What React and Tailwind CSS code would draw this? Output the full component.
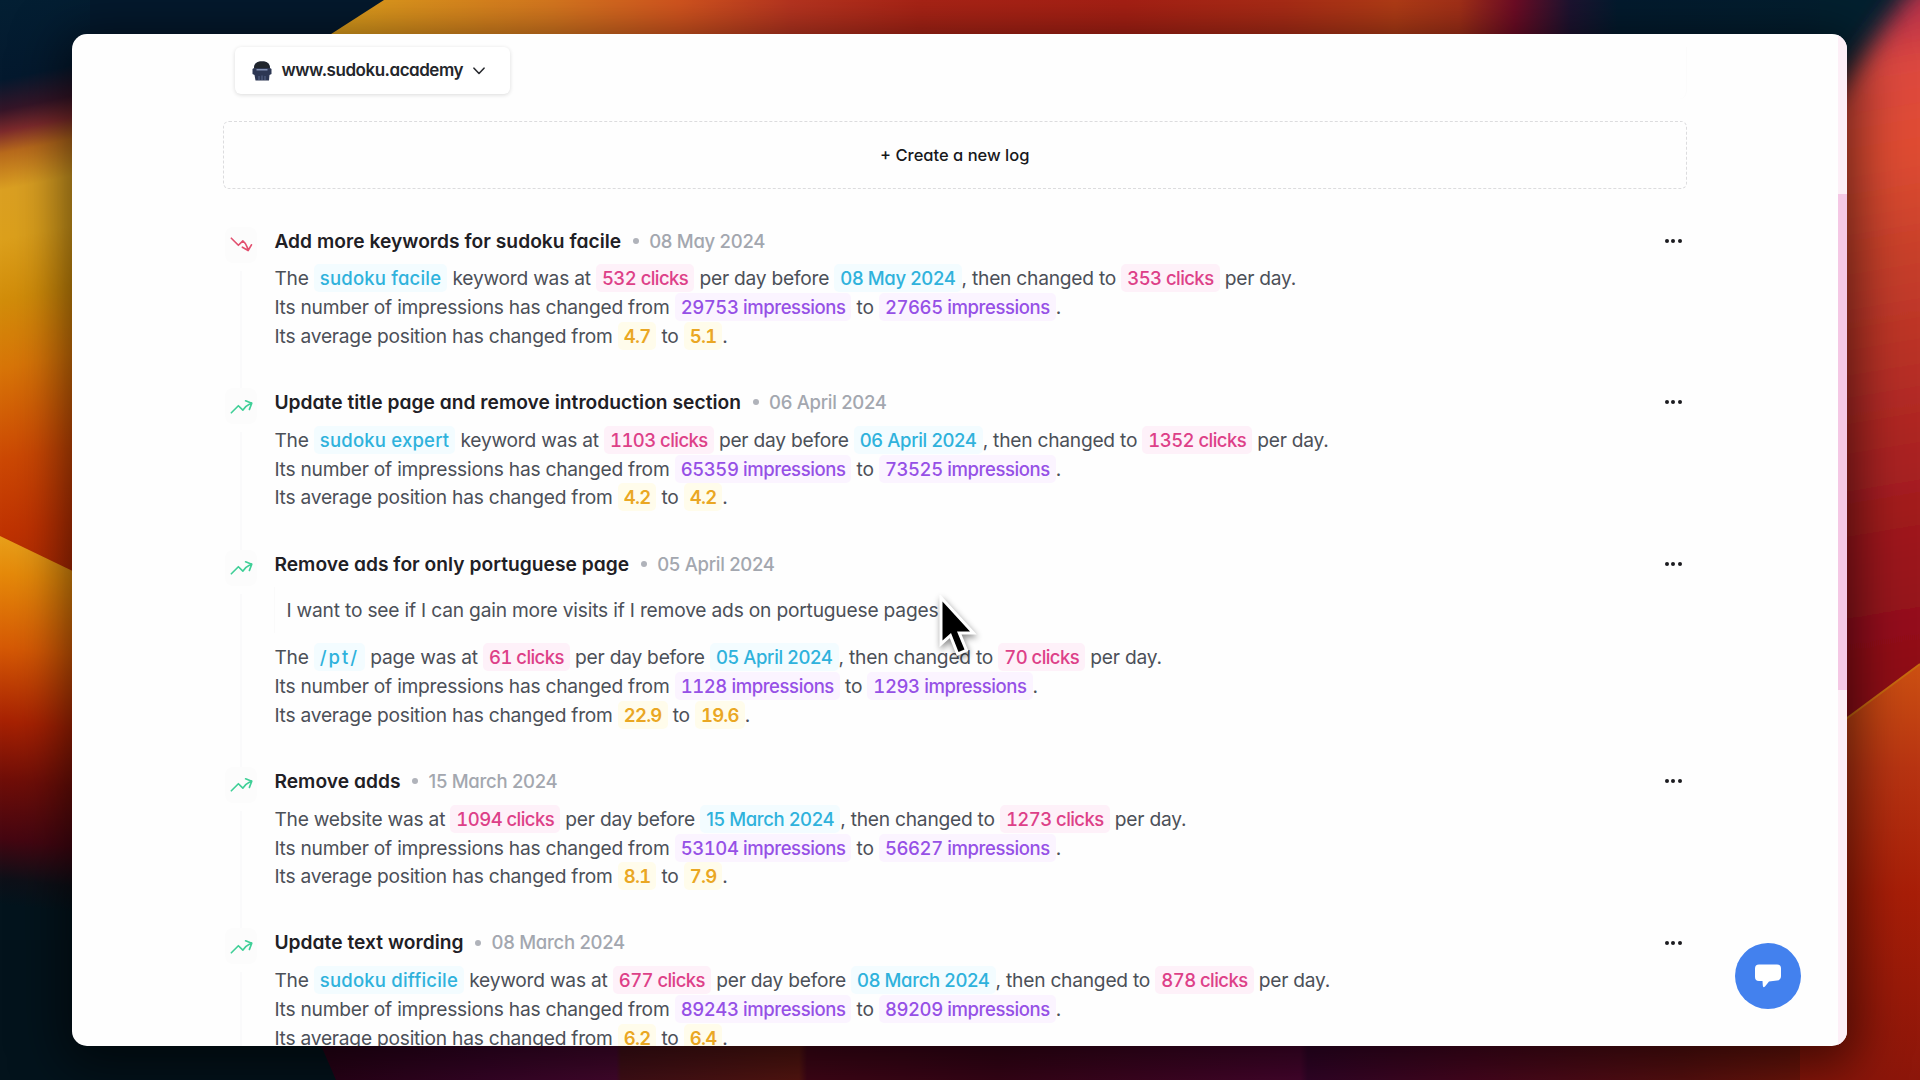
import React from 'react';

const logs = [
  {
    title: 'Add more keywords for sudoku facile', date: '08 May 2024', trend: 'down',
    subject: 'sudoku facile', kind: 'keyword was at', clicks: ['532', '353'],
    impressions: ['29753', '27665'], position: ['4.7', '5.1'],
  },
  {
    title: 'Update title page and remove introduction section', date: '06 April 2024', trend: 'up',
    subject: 'sudoku expert', kind: 'keyword was at', clicks: ['1103', '1352'],
    impressions: ['65359', '73525'], position: ['4.2', '4.2'],
  },
  {
    title: 'Remove ads for only portuguese page', date: '05 April 2024', trend: 'up',
    note: 'I want to see if I can gain more visits if I remove ads on portuguese pages',
    subject: '/pt/', kind: 'page was at', clicks: ['61', '70'],
    impressions: ['1128', '1293'], position: ['22.9', '19.6'],
  },
  {
    title: 'Remove adds', date: '15 March 2024', trend: 'up',
    kind: 'website was at', clicks: ['1094', '1273'],
    impressions: ['53104', '56627'], position: ['8.1', '7.9'],
  },
  {
    title: 'Update text wording', date: '08 March 2024', trend: 'up',
    subject: 'sudoku difficile', kind: 'keyword was at', clicks: ['677', '878'],
    impressions: ['89243', '89209'], position: ['6.2', '6.4'],
  },
];

const chipStyles = {
  subject: "bg-[#f3fcff] font-medium text-[#2fb2dc] tracking-[0.2px] [font-feature-settings:'cv11']",
  path: "bg-[#f3fcff] font-medium text-[#2fb2dc] tracking-[2px] [font-feature-settings:'cv11']",
  date: "bg-[#f3fcff] font-medium text-[#2fb2dc] tracking-[-0.34px] [font-feature-settings:'cv11']",
  clicks: "bg-[#fef1f9] font-medium text-[#dd4088] tracking-[-0.56px] [font-feature-settings:'cv11','tnum']",
  impressions: "bg-[#fbf4ff] font-medium text-[#9650e6] tracking-[-0.42px] [font-feature-settings:'cv11','tnum']",
  position: "bg-[#fffceb] font-semibold text-[#eaa723] tracking-[-0.8px] [font-feature-settings:'cv11','tnum']",
};

function Chip({ type, children }) {
  return (
    <span className={`rounded-[5px] px-[6px] py-[3px] text-[18.5px] ${chipStyles[type]}`}>
      {children}
    </span>
  );
}

function TrendIcon({ trend }) {
  return (
    <svg
      viewBox="0 0 24 24" fill="none" strokeWidth="1.6" strokeLinecap="round" strokeLinejoin="round"
      className={`size-[25px] ${trend === 'up' ? 'stroke-[#3fcf97]' : 'stroke-[#e2506f]'}`}
    >
      {trend === 'up' ? (
        <path d="M2.25 18 9 11.25l4.306 4.306a11.95 11.95 0 0 1 5.814-5.518l2.74-1.22m0 0-5.94-2.281m5.94 2.28-2.28 5.941" />
      ) : (
        <path d="M2.25 6 9 12.75l4.286-4.286a11.948 11.948 0 0 1 4.306 6.43l.776 2.898m0 0 3.182-5.511m-3.182 5.51-5.511-3.181" />
      )}
    </svg>
  );
}

function Ellipsis() {
  return (
    <button className="mr-[5.5px] flex h-[28.8px] items-center gap-[2.5px]">
      <span className="size-1 rounded-full bg-[#1b1b1f]" />
      <span className="size-1 rounded-full bg-[#1b1b1f]" />
      <span className="size-1 rounded-full bg-[#1b1b1f]" />
    </button>
  );
}

function LogEntry({ log }) {
  return (
    <li className="flex">
      <div className="flex w-[51.9px] shrink-0 flex-col items-center pr-[14px]">
        <div className="flex h-9 w-8 items-center justify-center rounded-lg bg-[#fcfcfc]">
          <TrendIcon trend={log.trend} />
        </div>
        <div className="mt-2 w-0.5 grow bg-[#fafafb]" />
      </div>
      <div className="grow pb-[37.3px]">
        <div className="flex items-center justify-between">
          <h2 className="flex h-[28.8px] items-center whitespace-nowrap [font-feature-settings:'cv11']">
            <span className="text-[19.2px] font-semibold tracking-[0.03px] text-[#1f2025]">{log.title}</span>
            <span className="mr-[10.5px] ml-[11.5px] size-[6px] rounded-full bg-[#b0b3ba]" />
            <span className="mt-px text-[18.5px] font-medium tracking-[-0.28px] text-[#a3a7af]">{log.date}</span>
          </h2>
          <Ellipsis />
        </div>
        {log.note && (
          <blockquote className="mt-[9px] mb-[10.7px] flex h-[45.2px] items-center border-l border-[#fafafa] pl-[11px] text-[19.2px] tracking-[-0.2px]">
            {log.note}
          </blockquote>
        )}
        <div className={`text-[19.2px] leading-[28.8px] tracking-[-0.24px] whitespace-nowrap ${log.note ? '' : 'mt-[9px]'}`}>
          <p>
            The {log.subject && <Chip type={log.subject.startsWith('/') ? 'path' : 'subject'}>{log.subject}</Chip>}{log.subject && ' '}
            {log.kind} <Chip type="clicks">{log.clicks[0]} clicks</Chip> per day before{' '}
            <Chip type="date">{log.date}</Chip>, then changed to{' '}
            <Chip type="clicks">{log.clicks[1]} clicks</Chip> per day.
          </p>
          <p>
            Its number of impressions has changed from{' '}
            <Chip type="impressions">{log.impressions[0]} impressions</Chip> to{' '}
            <Chip type="impressions">{log.impressions[1]} impressions</Chip>.
          </p>
          <p>
            Its average position has changed from{' '}
            <Chip type="position">{log.position[0]}</Chip> to <Chip type="position">{log.position[1]}</Chip>.
          </p>
        </div>
      </div>
    </li>
  );
}

function Stops({ items }) {
  return items.map(([offset, color]) => <stop key={offset} offset={offset} stopColor={color} />);
}

function Wallpaper() {
  return (
    <svg viewBox="0 0 1920 1080" className="absolute inset-0 size-full">
      <defs>
        <linearGradient id="top" gradientUnits="userSpaceOnUse" x1="330" y1="0" x2="1920" y2="0">
          <Stops items={[[0, '#dfa01c'], [0.14, '#d8781f'], [0.22, '#d4551f'], [0.29, '#b93520'], [0.37, '#ab2416'], [0.5, '#a82014'], [0.6, '#ab2c16'], [0.67, '#b23c16'], [0.71, '#a43018'], [0.745, '#6f0c25'], [0.78, '#1d1330'], [0.81, '#031b2e'], [1, '#03202f']]} />
        </linearGradient>
        <linearGradient id="leftTop" gradientUnits="userSpaceOnUse" x1="0" y1="0" x2="120" y2="590">
          <Stops items={[[0, '#031f33'], [0.13, '#04192e'], [0.18, '#351528'], [0.215, '#7c2a2c'], [0.25, '#b86a1c'], [0.31, '#dba022'], [0.39, '#dca01c'], [0.49, '#d28d0a'], [0.6, '#d87508'], [0.75, '#cc4804'], [0.87, '#bf3202'], [1, '#a82503']]} />
        </linearGradient>
        <linearGradient id="leftBottom" gradientUnits="userSpaceOnUse" x1="0" y1="536" x2="-40" y2="900">
          <Stops items={[[0, '#e8a01a'], [0.1, '#e68a0a'], [0.3, '#d65a05'], [0.5, '#a82203'], [0.66, '#700e08'], [0.82, '#450611'], [0.93, '#0e1018'], [1, '#03141d']]} />
        </linearGradient>
        <linearGradient id="rightTop" gradientUnits="userSpaceOnUse" x1="1850" y1="20" x2="1960" y2="680">
          <Stops items={[[0, '#b83048'], [0.08, '#dd4840'], [0.2, '#e04d32'], [0.36, '#c8402b'], [0.6, '#b02824'], [0.8, '#9c161c'], [1, '#8d0b18']]} />
        </linearGradient>
        <linearGradient id="rightBottom" gradientUnits="userSpaceOnUse" x1="0" y1="665" x2="0" y2="1080">
          <Stops items={[[0, '#cc5012'], [0.25, '#b83412'], [0.55, '#a81e08'], [1, '#8c160a']]} />
        </linearGradient>
        <linearGradient id="bottom" gradientUnits="userSpaceOnUse" x1="330" y1="0" x2="1920" y2="0">
          <Stops items={[[0, '#2a0218'], [0.1, '#3a0429'], [0.18, '#480830'], [0.183, '#451018'], [0.295, '#5b1712'], [0.3, '#440618'], [0.42, '#3a0418'], [0.61, '#4a0530'], [0.615, '#35042a'], [0.72, '#4b0620'], [0.85, '#5b1010'], [0.93, '#74160a'], [1, '#8c160a']]} />
        </linearGradient>
        <filter id="soften"><feGaussianBlur stdDeviation="12" /></filter>
      </defs>
      <path d="M0 0H960V1080H0Z" fill="#03202f" />
      <path d="M0 0H100V620H0Z" fill="url(#leftTop)" />
      <path d="M90 0H384L300 140H90Z" fill="#04192d" />
      <path d="M384 0H1920V140H166Z" fill="url(#top)" />
      <path d="M0 536L110 589V1080H0Z" fill="url(#leftBottom)" />
      <path d="M0 940H400V1080H0Z" fill="#03131c" />
      <path d="M310 1020L336 1080H1920V1020Z" fill="url(#bottom)" />
      <path d="M1820 0H1920V680L1820 730Z" fill="#03202f" />
      <path d="M1990 -90L1903 0L1838 92L1770 180V760L1990 700Z" fill="url(#rightTop)" filter="url(#soften)" />
      <path d="M1920 664L1800 753V1080H1920Z" fill="url(#rightBottom)" />
      <path d="M1920 664L1800 753" stroke="#c86a0f" strokeWidth="2" />
    </svg>
  );
}

function Cursor() {
  return (
    <svg viewBox="0 0 48 64" className="absolute left-[864px] top-[561px] h-16 w-12 drop-shadow-[1px_3px_3px_rgba(0,0,0,0.45)]">
      <path d="M6.5 6.5V45.5L15 38L22.5 57L28.5 54.5L21 36.5H34Z" fill="#000" stroke="#fff" strokeWidth="6" strokeLinejoin="miter" paintOrder="stroke" />
    </svg>
  );
}

function SiteAvatar() {
  return (
    <svg viewBox="0 0 20 20" className="-ml-px size-5">
      <path d="M2 7C2 2 5 .5 10 .5S18 2 18 7L19.500 8V13L17.500 14L17 19.500H3.500L2.500 14L.5 13V8Z" fill="#2d3753" />
      <path d="M2 7C3 2 5 .5 10 .5S17 2 18 7Z" fill="#20252c" />
      <path d="M4.500 8.800H15.500" stroke="#8290b4" strokeWidth="1.400" />
      <path d="M7 15V19M10 14.500V19M13 15V19" stroke="#5a688c" strokeWidth="1" />
    </svg>
  );
}

export default function App() {
  return (
    <div className="relative h-[1080px] w-[1920px] overflow-hidden py-[34px] pr-[73px] pl-[72px] font-['Inter',sans-serif] text-[#4c5058]">
      <Wallpaper />
      <main className="relative flex h-[1012px] overflow-hidden rounded-[15px] bg-[#fefefe] shadow-[0_12px_50px_10px_rgba(0,0,0,0.55)]">
        <div className="ml-[150.500px] w-[1464.500px] shrink-0">
          <header className="mt-[13px] flex h-[52px] items-start rounded-b-lg border-r border-[#fbfbfb] pl-3">
            <button className="flex h-[47px] w-[275px] items-center rounded-md bg-white pt-px pl-[18px] shadow-[0_1px_4px_rgba(0,0,0,0.14)]">
              <SiteAvatar />
              <span className="ml-[10px] w-[181px] text-left text-[17px] font-semibold tracking-[-0.47px] whitespace-nowrap text-[#24262b] [font-feature-settings:'cv11']">www.sudoku.academy</span>
              <svg viewBox="0 0 12 8" className="ml-[10px] h-2 w-3 fill-none stroke-[#2a2c31] stroke-[1.600]">
                <path d="M1 1.200L6 6.500L11 1.200" strokeLinecap="round" strokeLinejoin="round" />
              </svg>
            </button>
          </header>
          <button className="mt-[22px] flex h-[68px] w-full items-center justify-center rounded-md border border-dashed border-[#dcdcde] text-[16.500px] font-medium text-[#17181b] [font-feature-settings:'cv11']">
            + Create a new log
          </button>
          <ul className="mt-[37.600px]">
            {logs.map((log) => <LogEntry key={log.title} log={log} />)}
          </ul>
        </div>
        <div className="ml-auto h-full w-[9px] shrink-0 bg-[#fdeff7] pt-[160px]">
          <div className="h-[496px] bg-[#f5c8e5]" />
        </div>
        <Cursor />
        <button className="absolute right-[46.500px] bottom-[37.500px] flex size-[66px] items-center justify-center rounded-full bg-[#4381ee]">
          <svg viewBox="0 0 26 24" className="h-6 w-[26px] fill-white">
            <path d="M4 0.500H22Q26 .5 26 4.500V12Q26 16 22 16.500L14 17.500L10 22.500Q8 24.500 7.800 21.500L7.500 17H4Q0 17 0 13V4.500Q0 .5 4 .5Z" />
          </svg>
        </button>
      </main>
    </div>
  );
}
